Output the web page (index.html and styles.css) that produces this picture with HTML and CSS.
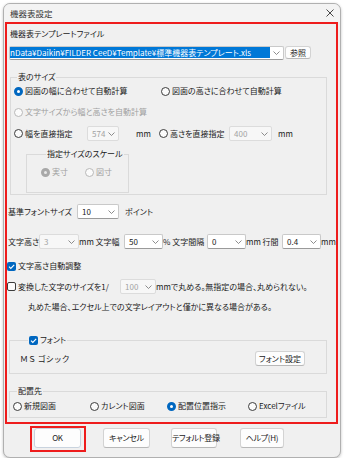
FILE: index.html
```html
<!doctype html>
<html lang="ja">
  <head>
    <meta charset="UTF-8" />
    <title>機器表設定</title>
    <link rel="stylesheet" href="styles.css">
  </head>
  <body>
    <div class="window">
      <div class="titlebar">
        <span class="title">機器表設定</span>
        <svg class="close" viewBox="0 0 8 8"><path d="M0.5 0.5 L7.5 7.5 M7.5 0.5 L0.5 7.5" /></svg>
      </div>

      <div class="panel">
        <!-- Template file -->
        <div class="file-label">機器表テンプレートファイル</div>
        <div class="file-row">
          <div class="combo file-combo">
            <span class="sel">nData¥Daikin¥FILDER CeeD¥Template¥標準機器表テンプレート.xls</span>
            <svg class="chev" viewBox="0 0 7 4"><path d="M0.5 0.5 L3.5 3.5 L6.5 0.5" /></svg>
          </div>
          <button class="btn ref-btn">参照</button>
        </div>

        <!-- Table size -->
        <fieldset class="group size-group">
          <legend>表のサイズ</legend>
          <div class="row size-r1">
            <span class="opt opt-w147"><i class="rb on"></i>図面の幅に合わせて自動計算</span>
            <span class="opt"><i class="rb"></i>図面の高さに合わせて自動計算</span>
          </div>
          <div class="row size-r2">
            <span class="opt off"><i class="rb"></i>文字サイズから幅と高さを自動計算</span>
          </div>
          <div class="row size-r3">
            <span class="opt opt-w73"><i class="rb"></i>幅を直接指定</span>
            <div class="combo dis w32"><span>574</span><svg class="chev" viewBox="0 0 7 4"><path d="M0.5 0.5 L3.5 3.5 L6.5 0.5" /></svg></div>
            <span class="unit-mm">mm</span>
            <span class="opt opt-w70"><i class="rb"></i>高さを直接指定</span>
            <div class="combo dis w43"><span>400</span><svg class="chev" viewBox="0 0 7 4"><path d="M0.5 0.5 L3.5 3.5 L6.5 0.5" /></svg></div>
            <span class="unit-mm2">mm</span>
          </div>
          <fieldset class="group scale-group">
            <legend>指定サイズのスケール</legend>
            <div class="row scale-r1">
              <span class="opt off opt-w44"><i class="rb on"></i>実寸</span>
              <span class="opt off"><i class="rb"></i>図寸</span>
            </div>
          </fieldset>
        </fieldset>

        <!-- Font size -->
        <div class="row base-row">
          <span class="lbl w69">基準フォントサイズ</span>
          <div class="combo w42"><span>10</span><svg class="chev" viewBox="0 0 7 4"><path d="M0.5 0.5 L3.5 3.5 L6.5 0.5" /></svg></div>
          <span class="pt">ポイント</span>
        </div>

        <div class="row char-row">
          <span class="lbl w31">文字高さ</span>
          <div class="combo dis w40"><span>3</span><svg class="chev" viewBox="0 0 7 4"><path d="M0.5 0.5 L3.5 3.5 L6.5 0.5" /></svg></div>
          <span class="lbl w45">mm 文字幅</span>
          <div class="combo w39"><span>50</span><svg class="chev" viewBox="0 0 7 4"><path d="M0.5 0.5 L3.5 3.5 L6.5 0.5" /></svg></div>
          <span class="lbl w44">% 文字間隔</span>
          <div class="combo w39"><span>0</span><svg class="chev" viewBox="0 0 7 4"><path d="M0.5 0.5 L3.5 3.5 L6.5 0.5" /></svg></div>
          <span class="lbl w36">mm 行間</span>
          <div class="combo w39"><span>0.4</span><svg class="chev" viewBox="0 0 7 4"><path d="M0.5 0.5 L3.5 3.5 L6.5 0.5" /></svg></div>
          <span class="lbl">mm</span>
        </div>

        <div class="row auto-row">
          <i class="cb on"><svg viewBox="0 0 9 9"><path d="M2 4.6 L3.8 6.4 L7.2 2.8" /></svg></i>
          <span>文字高さ自動調整</span>
        </div>

        <div class="row round-row">
          <i class="cb"></i>
          <span class="lbl w102">変換した文字のサイズを1/</span>
          <div class="combo dis w36"><span>100</span><svg class="chev" viewBox="0 0 7 4"><path d="M0.5 0.5 L3.5 3.5 L6.5 0.5" /></svg></div>
          <span>mmで丸める。無指定の場合、丸められない。</span>
        </div>

        <div class="row note-row">丸めた場合、エクセル上での文字レイアウトと僅かに異なる場合がある。</div>

        <!-- Font -->
        <fieldset class="group font-group">
          <legend class="cb-legend">
            <i class="cb on"><svg viewBox="0 0 9 9"><path d="M2 4.6 L3.8 6.4 L7.2 2.8" /></svg></i>フォント
          </legend>
          <div class="row font-row">
            <span class="font-name">ＭＳ ゴシック</span>
            <button class="btn font-btn">フォント設定</button>
          </div>
        </fieldset>

        <!-- Placement -->
        <fieldset class="group place-group">
          <legend>配置先</legend>
          <div class="row place-row">
            <span class="opt opt-w77"><i class="rb"></i>新規図面</span>
            <span class="opt opt-w77"><i class="rb"></i>カレント図面</span>
            <span class="opt opt-w81"><i class="rb on"></i>配置位置指示</span>
            <span class="opt"><i class="rb"></i>Excelファイル</span>
          </div>
        </fieldset>
      </div>

      <div class="footer">
        <div class="mark"><button class="btn foot-btn ok-btn">OK</button></div>
        <button class="btn foot-btn cancel-btn">キャンセル</button>
        <button class="btn foot-btn default-btn">テフォルト登録</button>
        <button class="btn foot-btn help-btn">ヘルプ(H)</button>
      </div>
    </div>
  </body>
</html>
```

FILE: styles.css
```css
* {
  box-sizing: border-box;
}

body {
  margin: 0;
  background: #ffffff;
  font-family: 'Noto Sans CJK JP', 'Noto Sans', sans-serif;
  font-size: 8px;
  line-height: 12px;
  color: #1a1a1a;
  font-feature-settings: 'palt';
}

.window {
  width: 338px;
  height: 455px;
  margin: 3px 0 0 3px;
  background: #f0f0f0;
  border: 1px solid #b0b0b0;
  border-radius: 7px;
  box-shadow: 0 1px 3px rgba(0, 0, 0, 0.25);
}

.titlebar {
  height: 18px;
  display: flex;
  align-items: center;
  justify-content: space-between;
  padding: 0 6px 0 6px;
  background: #f3f3f3;
  border-radius: 7px 7px 0 0;
}

.title {
  font-size: 8.5px;
  color: #333;
}

.close {
  width: 8px;
  height: 8px;
  stroke: #333;
  stroke-width: 0.9;
  fill: none;
}

/* red annotation frame round the settings area */
.panel {
  width: 333px;
  margin-left: 1px;
  border: 2px solid #ee1c1c;
  padding: 0 0 4px 0;
}

.file-label {
  margin-top: 4px;
  padding-left: 3px;
}

.file-row {
  display: flex;
  align-items: center;
  height: 15px;
  margin-top: 5px;
  padding-left: 2px;
}

.combo {
  height: 15px;
  flex: none;
  display: flex;
  align-items: center;
  justify-content: space-between;
  padding: 0 3px 0 4px;
  background: #ffffff;
  border: 1px solid #c9c9c9;
  border-bottom-color: #9a9a9a;
  border-radius: 2px;
  white-space: nowrap;
}

.combo.dis {
  background: #f7f7f7;
  border-color: #dcdcdc;
  color: #a3a3a3;
}

.chev {
  width: 7px;
  height: 4px;
  flex: none;
  stroke: #707070;
  stroke-width: 0.8;
  fill: none;
}

.file-combo {
  width: 275px;
  height: 14px;
  padding-left: 0;
}

.sel {
  width: 260px;
  overflow: hidden;
  background: #0078d7;
  color: #ffffff;
  line-height: 11px;
}

.btn {
  font: inherit;
  color: #1a1a1a;
  background: #fdfdfd;
  border: 1px solid #d3d3d3;
  border-bottom-color: #b8b8b8;
  border-radius: 3px;
  padding: 0;
  white-space: nowrap;
}

.ref-btn {
  width: 26px;
  height: 13px;
  margin-left: 1px;
  line-height: 10px;
}

.group {
  margin: 0;
  padding: 0;
  min-inline-size: 0;
  border: 1px solid #dadada;
}

.group legend {
  padding: 0 1px;
  line-height: 10px;
}

.row {
  display: flex;
  align-items: center;
  height: 12px;
  white-space: nowrap;
}

.opt {
  display: flex;
  align-items: center;
  flex: none;
}

.opt.off {
  color: #a0a0a0;
}

.rb {
  width: 9px;
  height: 9px;
  margin-right: 2px;
  flex: none;
  border: 1px solid #3c3c3c;
  border-radius: 50%;
  background: #fbfbfb;
}

.rb.on {
  border: 3px solid #0067c0;
  background: #ffffff;
}

.off .rb {
  border-color: #b8b8b8;
}

.off .rb.on {
  border: 3px solid #a8a8a8;
  background: #e8e8e8;
}

.cb {
  width: 9px;
  height: 9px;
  margin-right: 2px;
  flex: none;
  display: block;
  border: 1px solid #3c3c3c;
  border-radius: 2px;
  background: #fbfbfb;
}

.cb.on {
  border: none;
  background: #0067c0;
}

.cb svg {
  display: block;
  width: 9px;
  height: 9px;
  stroke: #ffffff;
  stroke-width: 1.1;
  fill: none;
}

/* table size group */
.size-group {
  width: 317px;
  margin: 12px 0 0 3px;
  padding: 0 0 1px 3px;
}

.size-group > legend {
  margin-left: 3px;
}

.size-r1 {
  margin-top: 3px;
}

.size-r2 {
  margin-top: 9px;
}

.size-r3 {
  height: 15px;
  margin-top: 8px;
}

.opt-w147 { width: 147px; }
.opt-w73 { width: 73px; }
.opt-w70 { width: 70px; }
.opt-w44 { width: 44px; }
.opt-w77 { width: 77px; }
.opt-w81 { width: 81px; }

.w31 { width: 31px; }
.w32 { width: 32px; }
.w36 { width: 36px; }
.w39 { width: 39px; }
.w40 { width: 40px; }
.w42 { width: 42px; }
.w43 { width: 43px; }
.w44 { width: 44px; }
.w45 { width: 45px; }
.w69 { width: 69px; }
.w102 { width: 102px; }

.unit-mm {
  width: 40px;
  flex: none;
  padding-left: 17px;
}

.unit-mm2 {
  padding-left: 6px;
}

.scale-group {
  width: 103px;
  margin: 8px 0 0 12px;
  padding: 0 0 14px 14px;
}

.scale-group > legend {
  margin-left: 5px;
}

.scale-r1 {
  margin-top: 7px;
}

/* font size rows */
.base-row {
  height: 15px;
  margin-top: 9px;
  padding-left: 1px;
}

.pt {
  padding-left: 6px;
}

.char-row {
  height: 15px;
  margin-top: 15px;
  padding-left: 1px;
}

.char-row .lbl {
  flex: none;
}

.auto-row {
  margin-top: 11px;
}

.round-row {
  height: 15px;
  margin-top: 7px;
}

.round-row .lbl {
  flex: none;
}

.note-row {
  margin-top: 7px;
  padding-left: 21px;
}

/* font group */
.font-group {
  width: 318px;
  margin: 21px 0 0 2px;
  padding: 0 0 7px 10px;
}

.cb-legend {
  display: flex;
  align-items: center;
  margin-left: 8px;
}

.group .cb-legend {
  line-height: 12px;
}

.font-row {
  height: 15px;
  margin-top: 5px;
}

.font-name {
  width: 235px;
  font-feature-settings: normal;
}

.font-btn {
  width: 50px;
  height: 15px;
  line-height: 12px;
}

/* placement group */
.place-group {
  width: 318px;
  margin: 12px 0 0 2px;
  padding: 0 0 5px 3px;
}

.place-group > legend {
  margin-left: 4px;
}

.place-row {
  margin-top: 4px;
}

/* dialog buttons */
.footer {
  display: flex;
  align-items: flex-start;
  margin-top: 2px;
}

.mark {
  margin-left: 26px;
  padding: 0 3px 2px 2px;
  border: 2px solid #ee1c1c;
}

.foot-btn {
  width: 47px;
  height: 20px;
  line-height: 16px;
  letter-spacing: -0.3px;
}

.ok-btn {
  border-color: #c9d3de;
}

.cancel-btn {
  margin: 2px 0 0 17px;
}

.default-btn {
  width: 46px;
  margin: 2px 0 0 21px;
}

.help-btn {
  width: 44px;
  margin: 2px 0 0 23px;
}
```
